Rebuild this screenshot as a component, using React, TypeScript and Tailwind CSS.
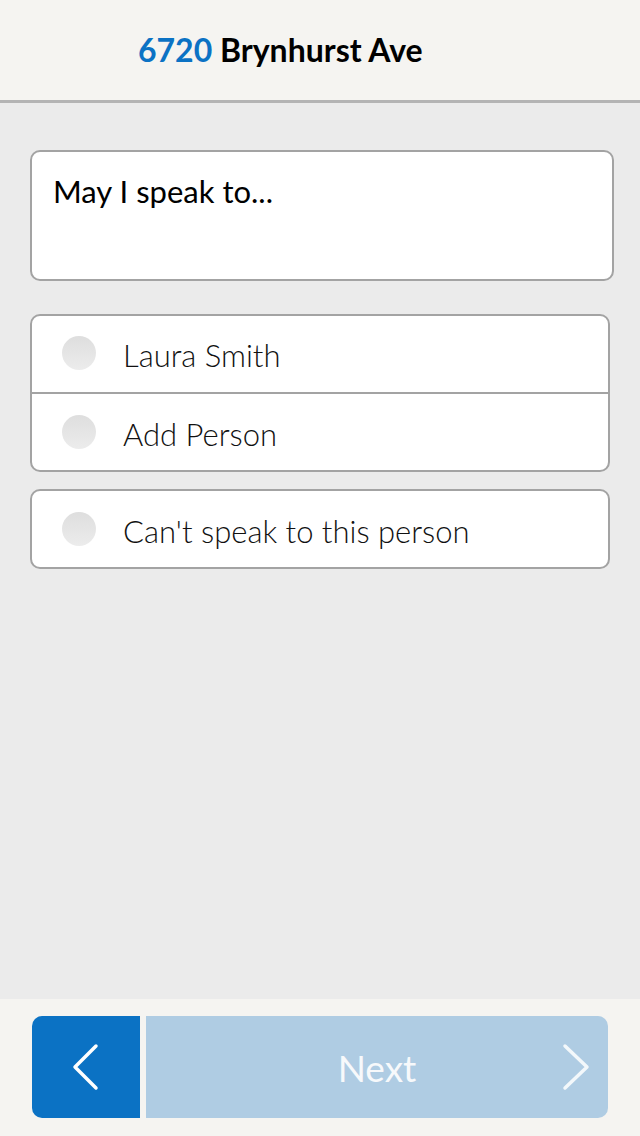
import React from 'react';

const options = [['Laura Smith', 'Add Person'], ["Can't speak to this person"]];

const Radio: React.FC = () => (
  <span className="block w-[34px] h-[34px] rounded-full bg-gradient-to-b from-[#dedede] to-[#ececec] shrink-0" />
);

const OptionRow: React.FC<{ label: string; divider?: boolean }> = ({ label, divider }) => (
  <div
    className={`flex items-center pl-[30px] ${divider ? 'h-[78px] pb-[2px] border-b-2 border-[#a3a3a3]' : 'h-[76px]'}`}
  >
    <Radio />
    <span className="ml-[27px] mt-[4px] text-[31px] font-light text-[#111] leading-none">{label}</span>
  </div>
);

const App: React.FC = () => {
  return (
    <div className="h-[1136px] w-[640px] flex flex-col bg-[#ebebeb] font-['Lato',sans-serif]">
      <header className="h-[103px] shrink-0 bg-[#f5f4f1] border-b-[3px] border-[#b4b4b4] flex items-center pl-[138px]">
        <h1 className="text-[32px] font-bold text-black leading-none">
          <span className="text-[#0b72c4]">6720</span> Brynhurst Ave
        </h1>
      </header>

      <main className="flex-1 px-[30px] pt-[47px] flex flex-col">
        <div className="w-[584px] h-[131px] bg-white border-2 border-[#a3a3a3] rounded-[10px] px-[21px] pt-[20px]">
          <p className="text-[31px] text-black leading-tight">May I speak to...</p>
        </div>

        <div className="mt-[33px] flex flex-col gap-[17px]">
          {options.map((group, gi) => (
            <div key={gi} className="w-[580px] bg-white border-2 border-[#a3a3a3] rounded-[10px] overflow-hidden">
              {group.map((label, i) => (
                <OptionRow key={label} label={label} divider={i < group.length - 1} />
              ))}
            </div>
          ))}
        </div>
      </main>

      <footer className="h-[137px] shrink-0 bg-[#f5f4f1] px-[32px] pt-[17px]">
        <div className="flex h-[102px] gap-[6px]">
          <button className="w-[108px] h-full bg-[#0b72c4] rounded-l-[10px] flex items-center justify-center">
            <svg width="34" height="48" viewBox="0 0 34 48" fill="none">
              <path d="M27 3 L6 24 L27 45" stroke="white" strokeWidth="3.5" strokeLinecap="round" strokeLinejoin="round" />
            </svg>
          </button>
          <button className="relative w-[462px] h-full bg-[#afcce3] rounded-r-[10px] flex items-center justify-center">
            <span className="text-[37px] text-[#f7f9fb] leading-none">Next</span>
            <svg className="absolute right-[14px] top-1/2 -translate-y-1/2" width="34" height="48" viewBox="0 0 34 48" fill="none">
              <path d="M5 3 L27 24 L5 45" stroke="white" strokeOpacity="0.85" strokeWidth="3.5" strokeLinecap="round" strokeLinejoin="round" />
            </svg>
          </button>
        </div>
      </footer>
    </div>
  );
};

export default App;
